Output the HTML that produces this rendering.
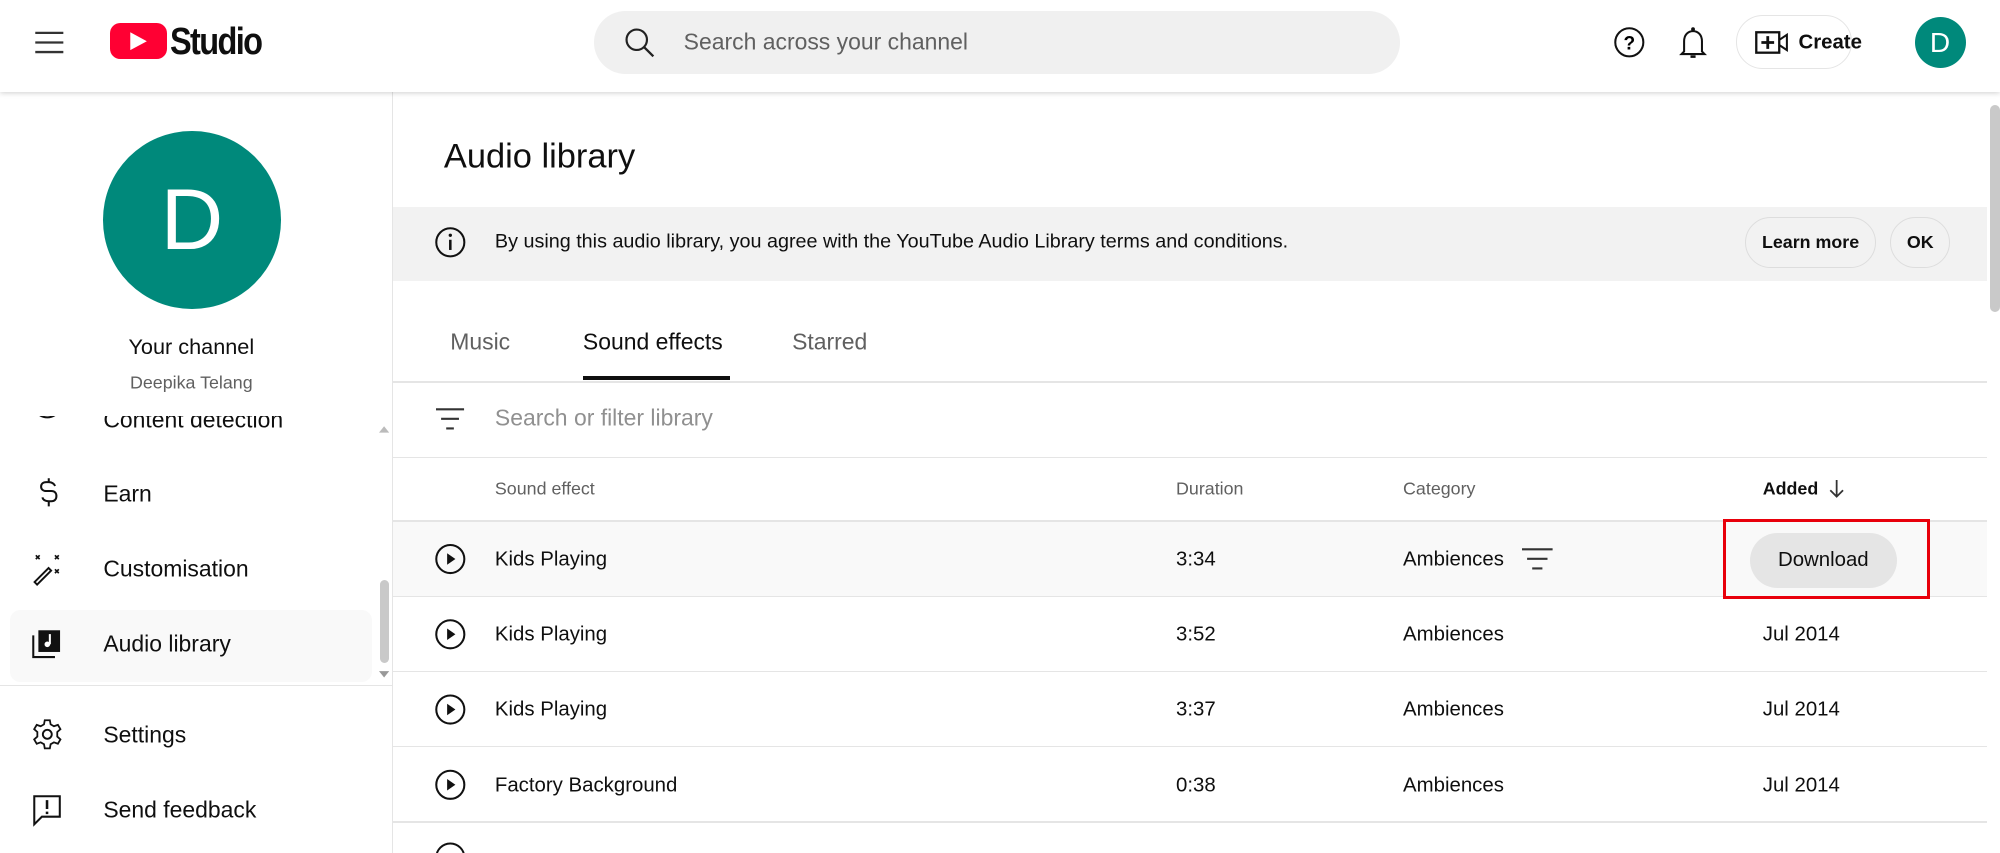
<!DOCTYPE html>
<html><head><meta charset="utf-8"><style>
*{box-sizing:border-box;margin:0;padding:0}
html,body{width:2000px;height:853px;overflow:hidden;background:#fff}
#w{zoom:1.27551;width:1568px;height:669px;position:relative;font-family:"Liberation Sans",Roboto,sans-serif;color:#0f0f0f}
.a{position:absolute}
.t{position:absolute;white-space:nowrap;transform:translateY(-50%)}
.hr{position:absolute;height:1px;background:#e5e5e5}
svg{position:absolute;overflow:visible}
</style></head><body><div id="w">
<!-- header -->
<div class="a" style="left:0;top:0;width:1568px;height:72px;background:#fff;box-shadow:0 1px 4px rgba(0,0,0,.18);z-index:2">
<svg style="left:27px;top:24px" width="24" height="18"><path d="M1 1.5H23M1 9H23M1 16.5H23" stroke="#333" stroke-width="1.8"/></svg>
<div class="a" style="left:86px;top:18px;width:45px;height:28px;background:#ff0033;border-radius:8px"></div>
<svg style="left:101px;top:24px" width="16" height="16"><path d="M1 1L14 8L1 15Z" fill="#fff"/></svg>
<div class="t" style="left:133px;top:33px;font-size:30px;font-weight:bold;letter-spacing:-1.5px;transform:translateY(-50%) scaleX(.85);transform-origin:left">Studio</div>
<div class="a" style="left:466px;top:9px;width:632px;height:49px;background:#f0f0f0;border-radius:25px"></div>
<svg style="left:489px;top:21px" width="24" height="24"><circle cx="10" cy="10" r="8" fill="none" stroke="#222" stroke-width="1.7"/><path d="M16 16L23 23" stroke="#222" stroke-width="1.8"/></svg>
<div class="t" style="left:536px;top:33px;font-size:18px;color:#606060">Search across your channel</div>
<svg style="left:1265px;top:21px" width="24" height="24"><circle cx="12" cy="12" r="11" fill="none" stroke="#111" stroke-width="1.6"/><text x="12" y="17.5" font-size="15" font-weight="bold" text-anchor="middle" font-family="Liberation Sans">?</text></svg>
<svg style="left:1316px;top:20px" width="24" height="28"><path d="M4 20V12C4 7 7 4 11 4S18 7 18 12V20L20 22H2Z" fill="none" stroke="#111" stroke-width="1.6"/><circle cx="11" cy="2.5" r="1.5" fill="#111"/><path d="M9 24H13" stroke="#111" stroke-width="2"/></svg>
<div class="a" style="left:1361px;top:12px;width:91px;height:42px;border:1px solid #e5e5e5;border-radius:21px"></div>
<svg style="left:1376px;top:24px" width="28" height="18"><rect x="1" y="1" width="18" height="16" fill="none" stroke="#111" stroke-width="1.8"/><path d="M10 4V14M5 9H15" stroke="#111" stroke-width="2.2"/><path d="M19 7L25 3V15L19 11" fill="none" stroke="#111" stroke-width="1.6"/></svg>
<div class="t" style="left:1410px;top:34px;font-size:16px;font-weight:bold">Create</div>
<div class="a" style="left:1501px;top:13px;width:40px;height:40px;border-radius:50%;background:#00897b;color:#fff;font-size:22px;text-align:center;line-height:40px">D</div>
</div>
<!-- sidebar -->
<div class="a" style="left:307px;top:72px;width:1px;height:597px;background:#e5e5e5"></div>
<div class="a" style="left:81px;top:103px;width:139px;height:139px;border-radius:50%;background:#00897b;color:#fff;font-size:68px;text-align:center;line-height:139px">D</div>
<div class="t" style="left:0;width:300px;text-align:center;top:272px;font-size:17px;font-weight:500">Your channel</div>
<div class="t" style="left:0;width:300px;text-align:center;top:300px;font-size:14px;color:#606060">Deepika Telang</div>
<div class="a" style="left:0;top:326px;width:295px;height:14px;overflow:hidden">
 <div class="t" style="left:81px;top:3px;font-size:18px">Content detection</div>
 <svg style="left:25px;top:-22px" width="24" height="30"><circle cx="12" cy="12" r="11" fill="none" stroke="#111" stroke-width="1.6"/><circle cx="12" cy="16" r="1.5" fill="#111"/></svg>
</div>
<div class="a" style="left:8px;top:478px;width:284px;height:57px;background:#f9f9f9;border-radius:8px"></div>
<svg style="left:28px;top:374px" width="20" height="28"><path d="M15 7C14 5 12 4 10 4H8C5.5 4 4 5.5 4 7.5S5.5 11 8 11H12C14.5 11 16 12.5 16 15S14.5 19 12 19H10C7.5 19 5.5 18 5 16M10 1V4M10 19V23" fill="none" stroke="#111" stroke-width="1.6"/></svg>
<div class="t" style="left:81px;top:387px;font-size:18px">Earn</div>
<svg style="left:25px;top:434px" width="24" height="24"><path d="M2 22L13 11L15 13L4 24Z" fill="none" stroke="#111" stroke-width="1.5"/><path d="M3 1L6 4M6 1L3 4M18 1L21 4M21 1L18 4M18 12L21 15M21 12L18 15" stroke="#111" stroke-width="1.3"/></svg>
<div class="t" style="left:81px;top:446px;font-size:18px">Customisation</div>
<svg style="left:25px;top:493px" width="24" height="24"><path d="M1 5V22H18" fill="none" stroke="#111" stroke-width="1.6"/><rect x="5" y="1" width="17" height="17" fill="#111"/><path d="M14 4V12" stroke="#fff" stroke-width="1.6"/><circle cx="12" cy="12" r="2.2" fill="#fff"/></svg>
<div class="t" style="left:81px;top:505px;font-size:18px;font-weight:500">Audio library</div>
<div class="a" style="left:298px;top:455px;width:7px;height:65px;background:#c9c9c9;border-radius:4px"></div>
<svg style="left:297px;top:333px" width="8" height="200"><path d="M0 6L4 1L8 6Z" fill="#bbb"/><path d="M0 193L4 198L8 193Z" fill="#999"/></svg>
<div class="hr" style="left:0;top:537px;width:307px"></div>
<svg style="left:25px;top:564px" width="24" height="24"><circle cx="12" cy="12" r="3.5" fill="none" stroke="#111" stroke-width="1.5"/><path d="M10 1H14L14.6 4.2L17.2 5.7L20.3 4.6L22.3 8L19.8 10.2V13.8L22.3 16L20.3 19.4L17.2 18.3L14.6 19.8L14 23H10L9.4 19.8L6.8 18.3L3.7 19.4L1.7 16L4.2 13.8V10.2L1.7 8L3.7 4.6L6.8 5.7L9.4 4.2Z" fill="none" stroke="#111" stroke-width="1.4"/></svg>
<div class="t" style="left:81px;top:576px;font-size:18px">Settings</div>
<svg style="left:26px;top:623px" width="22" height="26"><path d="M1 1H21V17H7L1 23Z" fill="none" stroke="#111" stroke-width="1.6"/><path d="M11 4V11M11 13V15" stroke="#111" stroke-width="2"/></svg>
<div class="t" style="left:81px;top:635px;font-size:18px">Send feedback</div>
<!-- main -->
<div class="t" style="left:348px;top:123px;font-size:27px;font-weight:500">Audio library</div>
<div class="a" style="left:308px;top:162px;width:1250px;height:58px;background:#f2f2f2"></div>
<svg style="left:341px;top:178px" width="24" height="24"><circle cx="12" cy="12" r="11" fill="none" stroke="#111" stroke-width="1.6"/><path d="M12 10V18" stroke="#111" stroke-width="2"/><circle cx="12" cy="6.5" r="1.3" fill="#111"/></svg>
<div class="t" style="left:388px;top:190px;font-size:15.5px">By using this audio library, you agree with the YouTube Audio Library terms and conditions.</div>
<div class="a" style="left:1368px;top:170px;width:103px;height:40px;border:1px solid #ddd;border-radius:20px;font-size:14px;font-weight:bold;text-align:center;line-height:38px">Learn more</div>
<div class="a" style="left:1482px;top:170px;width:47px;height:40px;border:1px solid #ddd;border-radius:20px;font-size:14px;font-weight:bold;text-align:center;line-height:38px">OK</div>
<div class="a" style="left:1560px;top:82px;width:8px;height:163px;background:#c9c9c9;border-radius:4px"></div>
<div class="t" style="left:353px;top:268px;font-size:18px;color:#606060">Music</div>
<div class="t" style="left:457px;top:268px;font-size:18px;font-weight:500">Sound effects</div>
<div class="t" style="left:621px;top:268px;font-size:18px;color:#606060">Starred</div>
<div class="a" style="left:457px;top:295px;width:115px;height:3px;background:#0f0f0f"></div>
<div class="hr" style="left:308px;top:299px;width:1250px"></div>
<svg style="left:342px;top:320px" width="22" height="18"><path d="M0 1H22M4 8.5H18M8 16H14" stroke="#333" stroke-width="1.7"/></svg>
<div class="t" style="left:388px;top:328px;font-size:18px;color:#909090">Search or filter library</div>
<div class="hr" style="left:308px;top:358px;width:1250px"></div>
<div class="t" style="left:388px;top:383px;font-size:14px;color:#606060">Sound effect</div>
<div class="t" style="left:922px;top:383px;font-size:14px;color:#606060">Duration</div>
<div class="t" style="left:1100px;top:383px;font-size:14px;color:#606060">Category</div>
<div class="t" style="left:1382px;top:383px;font-size:14px;font-weight:bold">Added</div>
<svg style="left:1434px;top:376px" width="12" height="15"><path d="M6 0V13M1 8L6 13L11 8" fill="none" stroke="#333" stroke-width="1.4"/></svg>
<div class="hr" style="left:308px;top:408px;width:1250px"></div>
<div class="a" style="left:308px;top:409px;width:1250px;height:58px;background:#f9f9f9"></div>
<div class="hr" style="left:308px;top:467px;width:1250px"></div>
<div class="hr" style="left:308px;top:526px;width:1250px"></div>
<div class="hr" style="left:308px;top:585px;width:1250px"></div>
<div class="hr" style="left:308px;top:644px;width:1250px"></div>

<svg style="left:341px;top:427px" width="24" height="250"><g fill="none" stroke="#111" stroke-width="1.6"><circle cx="12" cy="11" r="11"/><circle cx="12" cy="70" r="11"/><circle cx="12" cy="129" r="11"/><circle cx="12" cy="188" r="11"/><circle cx="12" cy="245" r="11"/></g><g fill="#111"><path d="M9.5 6.5L16 11L9.5 15.5Z"/><path d="M9.5 65.5L16 70L9.5 74.5Z"/><path d="M9.5 124.5L16 129L9.5 133.5Z"/><path d="M9.5 183.5L16 188L9.5 192.5Z"/></g></svg>

<div class="t" style="left:388px;top:439px;font-size:16px">Kids Playing</div>
<div class="t" style="left:922px;top:439px;font-size:16px">3:34</div>
<div class="t" style="left:1100px;top:439px;font-size:16px">Ambiences</div>
<svg style="left:1193px;top:430px" width="24" height="18"><path d="M0 1H24M4 8.5H20M8 16H16" stroke="#333" stroke-width="1.7"/></svg>
<div class="a" style="left:1372px;top:418px;width:115px;height:43px;background:#e5e5e5;border-radius:22px;font-size:16px;font-weight:500;text-align:center;line-height:43px">Download</div>
<div class="a" style="left:1351px;top:407px;width:162px;height:63px;border:3px solid #e8000b"></div>

<div class="t" style="left:388px;top:498px;font-size:16px">Kids Playing</div>
<div class="t" style="left:922px;top:498px;font-size:16px">3:52</div>
<div class="t" style="left:1100px;top:498px;font-size:16px">Ambiences</div>
<div class="t" style="left:1382px;top:498px;font-size:16px">Jul 2014</div>

<div class="t" style="left:388px;top:557px;font-size:16px">Kids Playing</div>
<div class="t" style="left:922px;top:557px;font-size:16px">3:37</div>
<div class="t" style="left:1100px;top:557px;font-size:16px">Ambiences</div>
<div class="t" style="left:1382px;top:557px;font-size:16px">Jul 2014</div>

<div class="t" style="left:388px;top:616px;font-size:16px">Factory Background</div>
<div class="t" style="left:922px;top:616px;font-size:16px">0:38</div>
<div class="t" style="left:1100px;top:616px;font-size:16px">Ambiences</div>
<div class="t" style="left:1382px;top:616px;font-size:16px">Jul 2014</div>
</div></body></html>
